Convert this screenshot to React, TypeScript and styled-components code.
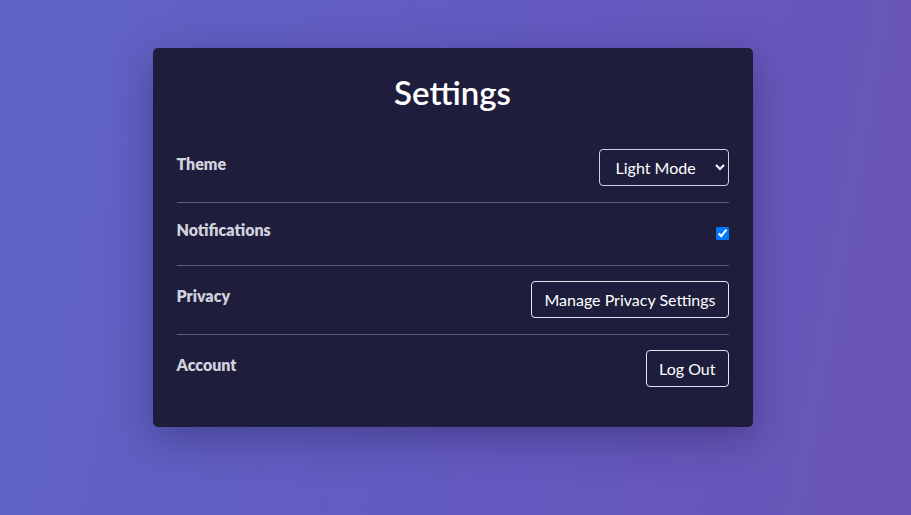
import styled, { createGlobalStyle } from "styled-components";

const GlobalStyle = createGlobalStyle`
  html, body {
    margin: 0;
    padding: 0;
  }
  body {
    font-family: Lato, "Noto Sans", "Liberation Sans", sans-serif;
  }
`;

const Page = styled.div`
  min-height: 100vh;
  width: 100%;
  box-sizing: border-box;
  padding: 48px 6px 0 0;
  display: flex;
  justify-content: center;
  align-items: flex-start;
  background: linear-gradient(100deg, #5f64c5 0%, #6459bf 60%, #6a55b6 100%);
`;

const Card = styled.div`
  width: 600px;
  box-sizing: border-box;
  padding: 24px;
  background: #1e1e3c;
  border-radius: 5px;
  box-shadow: 0 12px 40px rgba(20, 16, 60, 0.35);
  color: #ffffff;
`;

const Title = styled.h1`
  margin: 0 0 22px;
  font-size: 33px;
  line-height: 40px;
  font-weight: 600;
  text-align: center;
  color: #ffffff;
`;

const Row = styled.div<{ $last?: boolean }>`
  display: flex;
  justify-content: space-between;
  align-items: center;
  padding: 15px 0 16px;
  border-bottom: ${(p) => (p.$last ? "none" : "1px solid #5c5c7e")};
`;

const Label = styled.label`
  display: block;
  margin-bottom: 8px;
  font-size: 16px;
  line-height: 23px;
  font-weight: 800;
  color: #d2d2de;
`;

const Select = styled.select`
  box-sizing: border-box;
  height: 37px;
  width: 130px;
  padding: 0 8px 0 12px;
  font-family: inherit;
  font-size: 16px;
  color: #ffffff;
  background: transparent;
  border: 1px solid #cfcfe6;
  border-radius: 4px;
  color-scheme: dark;

  option {
    background: #1e1e3c;
  }
`;

const Check = styled.input`
  width: 13px;
  height: 13px;
  margin: 0;
`;

const Button = styled.button`
  box-sizing: border-box;
  height: 37px;
  padding: 0 12px;
  font-family: inherit;
  font-size: 16px;
  color: #ffffff;
  background: transparent;
  border: 1px solid #e6e6f2;
  border-radius: 4px;
  cursor: pointer;
`;

export default function App() {
  return (
    <Page>
      <GlobalStyle />
      <Card>
        <Title>Settings</Title>
        <Row>
          <Label>Theme</Label>
          <Select defaultValue="light">
            <option value="light">Light Mode</option>
            <option value="dark">Dark Mode</option>
          </Select>
        </Row>
        <Row>
          <Label>Notifications</Label>
          <Check type="checkbox" defaultChecked />
        </Row>
        <Row>
          <Label>Privacy</Label>
          <Button>Manage Privacy Settings</Button>
        </Row>
        <Row $last>
          <Label>Account</Label>
          <Button>Log Out</Button>
        </Row>
      </Card>
    </Page>
  );
}
